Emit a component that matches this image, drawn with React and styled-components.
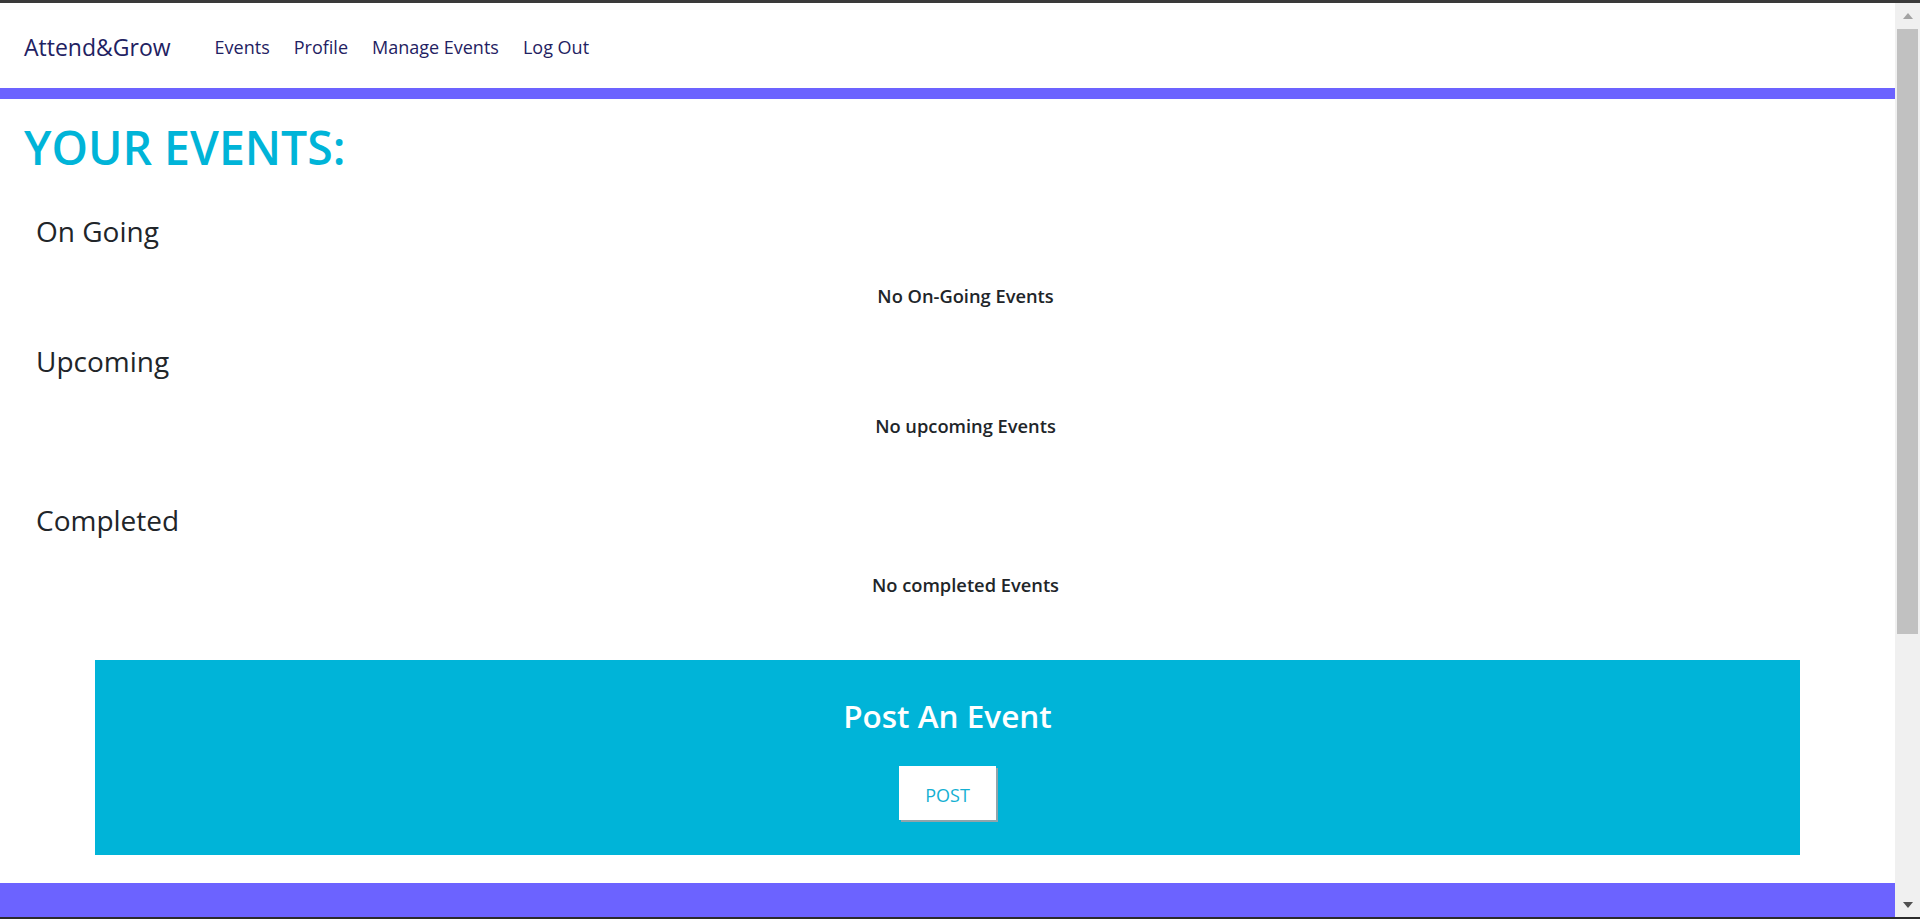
import React from "react";
import styled, { createGlobalStyle } from "styled-components";

const GlobalStyle = createGlobalStyle`
  html, body {
    margin: 0;
    padding: 0;
    height: 100%;
    overflow: hidden;
    background: #ffffff;
  }
  body {
    font-family: "Open Sans", "Noto Sans", "Liberation Sans", sans-serif;
    color: #212529;
  }
  * { box-sizing: border-box; }
`;

const Screen = styled.div`
  width: 1920px;
  height: 919px;
  display: flex;
  flex-direction: column;
  background: #ffffff;
`;

const ChromeEdge = styled.div`
  flex: 0 0 ${(p) => p.$h}px;
  background: ${(p) => p.$color};
`;

const Frame = styled.div`
  flex: 1;
  display: flex;
  min-height: 0;
`;

const Viewport = styled.div`
  flex: 1;
  display: flex;
  flex-direction: column;
  overflow: hidden;
  min-width: 0;
`;

const Navbar = styled.nav`
  flex: 0 0 85px;
  display: flex;
  align-items: center;
  padding: 2px 0 0 24px;
  background: #ffffff;
`;

const Brand = styled.a`
  font-size: 23px;
  line-height: 32px;
  color: #1f2262;
  text-decoration: none;
  margin-right: 32px;
  white-space: nowrap;
`;

const NavList = styled.ul`
  display: flex;
  list-style: none;
  margin: 0;
  padding: 0;
`;

const NavLink = styled.a`
  display: block;
  padding: 0 12px;
  font-size: 18px;
  line-height: 26px;
  color: #1f2262;
  text-decoration: none;
  white-space: nowrap;
`;

const AccentBar = styled.div`
  flex: 0 0 11px;
  background: #6c63ff;
`;

const Main = styled.main`
  padding: 0 0 0 24px;
  display: flex;
  flex-direction: column;
`;

const PageTitle = styled.h1`
  margin: 21px 0 0;
  font-size: 46.4px;
  line-height: 54px;
  font-weight: 600;
  color: #00b4d8;
`;

const SectionList = styled.div`
  margin-top: 40px;
  padding-left: 12px;
  display: flex;
  flex-direction: column;
`;

const Section = styled.section`
  display: flex;
  flex-direction: column;
  gap: 36px;
  margin-bottom: ${(p) => (p.$extra ? 65 : 36)}px;
`;

const SectionTitle = styled.h3`
  margin: 0;
  font-size: 28px;
  line-height: 34px;
  font-weight: 500;
  color: #212529;
`;

const EmptyNote = styled.p`
  margin: 0;
  text-align: center;
  font-size: 18.3px;
  line-height: 24px;
  font-weight: 600;
  color: #212529;
`;

const PostPanel = styled.div`
  width: 90%;
  height: 195px;
  margin: 27px auto 0;
  padding-top: 37px;
  background: #00b4d8;
  display: flex;
  flex-direction: column;
  align-items: center;
  gap: 32px;
  flex-shrink: 0;
`;

const PanelTitle = styled.h2`
  margin: 0;
  font-size: 31.5px;
  line-height: 37px;
  font-weight: 600;
  color: #ffffff;
`;

const PostButton = styled.button`
  width: 97px;
  height: 54px;
  padding: 3px 0 0;
  border: none;
  background: #ffffff;
  color: #14b0d2;
  font-family: inherit;
  font-size: 18px;
  font-weight: 400;
  box-shadow: 2px 2px 0 #90a4ab;
  cursor: pointer;
`;

const Footer = styled.footer`
  margin-top: 28px;
  flex: 0 0 60px;
  background: #6c63ff;
`;

const ScrollTrack = styled.div`
  flex: 0 0 25px;
  background: #f0f0f0;
  display: flex;
  flex-direction: column;
`;

const ScrollArrow = styled.div`
  flex: 0 0 25px;
  display: flex;
  align-items: center;
  justify-content: center;
  &::before {
    content: "";
    width: 0;
    height: 0;
    border-left: 5.5px solid transparent;
    border-right: 5.5px solid transparent;
    ${(p) =>
      p.$down
        ? `border-top: 6px solid #505050;`
        : `border-bottom: 6px solid #a3a3a3;`}
  }
`;

const ScrollThumb = styled.div`
  flex: 0 0 605px;
  margin: 1px 2px 0;
  background: #c1c1c1;
`;

const ScrollGap = styled.div`
  flex: 1;
`;

const sections = [
  { title: "On Going", note: "No On-Going Events" },
  { title: "Upcoming", note: "No upcoming Events", extra: true },
  { title: "Completed", note: "No completed Events" },
];

export default function App() {
  return (
    <>
      <GlobalStyle />
      <Screen>
        <ChromeEdge $h={3} $color="#3a3a3a" />
        <Frame>
          <Viewport>
            <Navbar>
              <Brand href="#">Attend&amp;Grow</Brand>
              <NavList>
                <li><NavLink href="#">Events</NavLink></li>
                <li><NavLink href="#">Profile</NavLink></li>
                <li><NavLink href="#">Manage Events</NavLink></li>
                <li><NavLink href="#">Log Out</NavLink></li>
              </NavList>
            </Navbar>
            <AccentBar />
            <Main>
              <PageTitle>YOUR EVENTS:</PageTitle>
              <SectionList>
                {sections.map((s) => (
                  <Section key={s.title} $extra={s.extra}>
                    <SectionTitle>{s.title}</SectionTitle>
                    <EmptyNote>{s.note}</EmptyNote>
                  </Section>
                ))}
              </SectionList>
            </Main>
            <PostPanel>
              <PanelTitle>Post An Event</PanelTitle>
              <PostButton>POST</PostButton>
            </PostPanel>
            <Footer />
          </Viewport>
          <ScrollTrack>
            <ScrollArrow />
            <ScrollThumb />
            <ScrollGap />
            <ScrollArrow $down />
          </ScrollTrack>
        </Frame>
        <ChromeEdge $h={2} $color="#2b2b2b" />
      </Screen>
    </>
  );
}
